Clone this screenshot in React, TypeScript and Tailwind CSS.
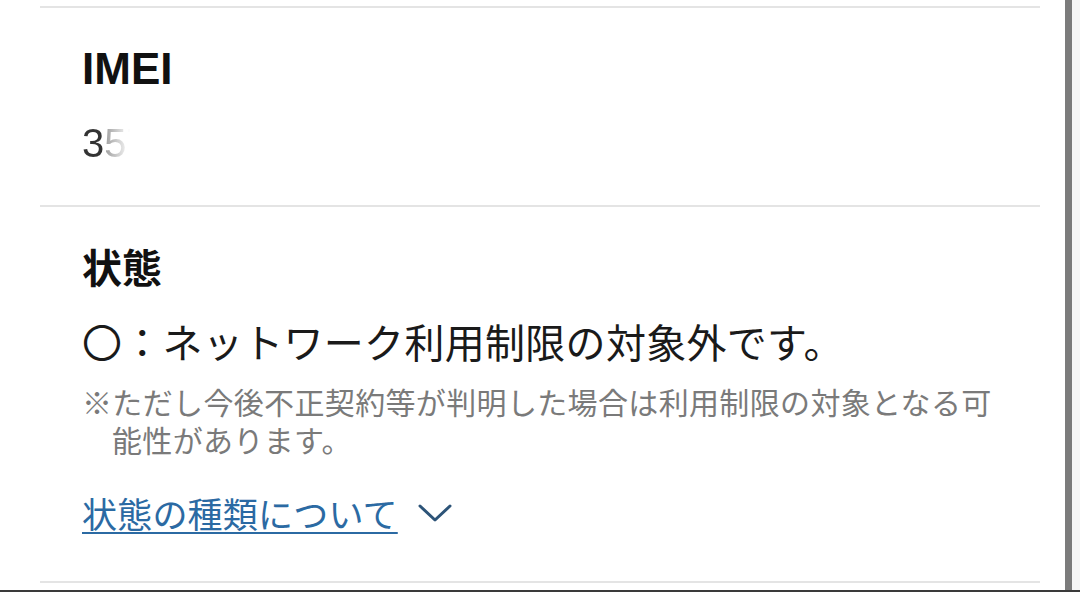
import React from "react"

// --- Small pieces ---
const Chevron = () => (
    <svg width="34" height="20" viewBox="0 0 34 20" className="shrink-0" aria-hidden="true">
        <polyline
            points="2,3 17,17 32,3"
            fill="none"
            stroke="#2d5478"
            strokeWidth="3"
            strokeLinecap="round"
            strokeLinejoin="round"
        />
    </svg>
)

const jp = "font-['Noto_Sans_CJK_JP',sans-serif]"

export default function App() {
    return (
        <div className="w-[1080px] h-[592px] bg-white flex flex-col overflow-hidden">
            <div className="flex flex-1 min-h-0">
                <main className="w-[1065px] pl-10 pr-[25px] pt-[6px] flex flex-col">
                    {/* IMEI */}
                    <section className="border-t-2 border-[#e4e4e4] px-[42px] pt-[35px] pb-[38px]">
                        <h2 className="font-['Liberation_Sans',Arial,sans-serif] font-bold text-[44px] leading-[52px] text-[#111]">
                            IMEI
                        </h2>
                        <p className="mt-[24px] leading-[48px] font-['Liberation_Sans',Arial,sans-serif] text-[40px]">
                            <span className="inline-block bg-linear-to-r from-[#333] from-[32%] via-[#a8a8a8] via-[38%] to-white to-[72%] bg-clip-text text-transparent">
                                357
                            </span>
                        </p>
                    </section>

                    {/* 状態 */}
                    <section className={`border-t-2 border-[#e4e4e4] px-[42px] pt-[33px] pb-[46px] ${jp}`}>
                        <h2 className="font-bold text-[40px] leading-[52px] text-[#111]">状態</h2>
                        <p className="mt-[23px] text-[40px] tracking-[0.3px] leading-[52px] text-[#1a1a1a]">
                            〇：ネットワーク利用制限の対象外です。
                        </p>
                        <p className="mt-[15px] pl-[1em] -indent-[1em] text-[30px] tracking-[0.35px] leading-[38px] text-[#7a7a7a]">
                            ※ただし今後不正契約等が判明した場合は利用制限の対象となる可能性があります。
                        </p>
                        <div className="mt-[33px] flex items-center gap-[20px] h-[44px]">
                            <a className="text-[35px] tracking-[0.2px] leading-[44px] text-[#2b6aa3] underline decoration-2 underline-offset-[4px] cursor-pointer">
                                状態の種類について
                            </a>
                            <Chevron />
                        </div>
                    </section>

                    <div className="border-t-2 border-[#e4e4e4]" />
                </main>
                <div className="w-[7px] bg-[#7b7b7b]" />
                <div className="flex-1 bg-[#f6f6f6]" />
            </div>
            <div className="h-[2px] bg-[#3a3a3a]" />
        </div>
    )
}
